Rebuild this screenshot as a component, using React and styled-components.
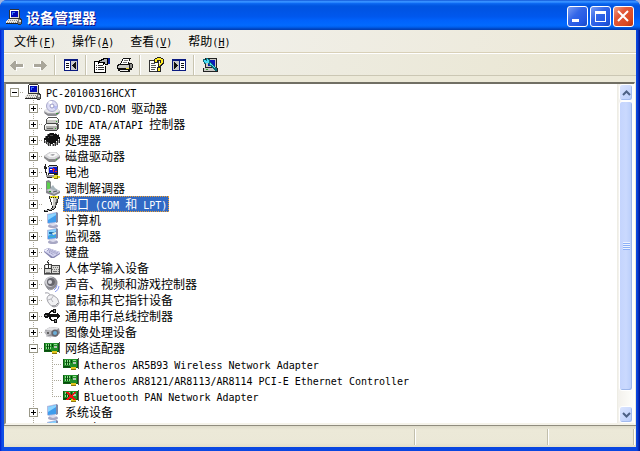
import React, { useState } from "react";
import styled, { createGlobalStyle, css } from "styled-components";

const GlobalStyle = createGlobalStyle`
  *, *::before, *::after {
    box-sizing: border-box;
  }
  body {
    margin: 0;
    background: #9fb4e0;
    color: #000;
    font-family: "Noto Sans CJK SC", sans-serif;
    font-size: 12px;
    line-height: 16px;
  }
  button {
    margin: 0;
    padding: 0;
    border: 0;
    background: transparent;
    color: inherit;
    font: inherit;
  }
  svg {
    display: block;
    flex: none;
  }
`;

const dots = (angle) =>
  `repeating-linear-gradient(${angle}, #aca899 0 1px, #fff 1px 2px)`;

/* ---------- icons ---------- */

const Pixel = ({ children }) => (
  <svg
    width="16"
    height="16"
    viewBox="0 0 16 16"
    shapeRendering="crispEdges"
    aria-hidden="true"
  >
    {children}
  </svg>
);

const Smooth = ({ children }) => (
  <svg width="16" height="16" viewBox="0 0 16 16" aria-hidden="true">
    {children}
  </svg>
);

const PcIcon = () => (
  <Pixel>
    <path fill="#333" d="M4 0h9v1h1v9H3V1h1z" />
    <path fill="#d6d3ce" d="M4 1h9v8H4z" />
    <path fill="#0008b8" d="M5 2h7v6H5z" />
    <path fill="#3f7cf8" d="M6 3h3v1H6zM6 4h1v2H6z" />
    <path fill="#fff" d="M4 1h9v1H4zM4 1h1v8H4z" />
    <path fill="#e8e6e0" d="M2 10h10v1H2zM1 11h12v1H1zM0 12h13v2H0z" />
    <path fill="#8b8b8b" d="M2 11h1v1H2zM4 11h1v1H4zM6 11h1v1H6zM8 11h1v1H8zM10 11h1v1h-1zM1 13h1v1H1zM3 13h1v1H3zM5 13h1v1H5zM7 13h1v1H7zM9 13h1v1H9z" />
    <path fill="#222" d="M0 14h12v1H0z" />
    <path fill="#777" d="M12 10h3v5h-2v1h-1v-2h-1v-2h1z" />
    <path fill="#ddd" d="M13 11h2v2h-2z" />
    <path fill="#333" d="M14 9h1v1h1v5h-1v-4h-1zM12 15h3v1h-3z" />
  </Pixel>
);

const DiscIcon = () => (
  <Smooth>
    <path d="M0 11l4-3h9l3 3v2l-4 3H4l-4-3z" fill="#a9a9ae" />
    <path d="M0 11l4-3h9l3 3-4 2H4z" fill="#e9e9ec" />
    <path d="M1 13l3 2h8l3-2" fill="none" stroke="#77777c" />
    <circle cx="8" cy="6" r="5.5" fill="#dcdcf4" stroke="#a8a8c8" />
    <path d="M8 6L4 2a6 6 0 0 1 4-1z" fill="#fff" />
    <path d="M8 6l4 4a6 6 0 0 0 1-4z" fill="#b6bcf2" />
    <circle cx="8" cy="6" r="2" fill="#fff" stroke="#9898c4" />
    <path d="M12 13h2v1h-2z" fill="#3c9a3c" />
  </Smooth>
);

const IdeIcon = () => (
  <Pixel>
    <path fill="#555" d="M4 1h9v1h1v1h1v4h-1v1H2V3h1V2h1z" />
    <path fill="#c8c8c4" d="M3 4h11v3H3z" />
    <path fill="#fff" d="M4 2h9v1H4zM3 3h11v1H3z" />
    <path fill="#444" d="M2 7h10v1h1v1h1v5h-1v1H1v-1H0V9h1V8h1z" />
    <path fill="#b2b2ae" d="M1 10h12v4H1z" />
    <path fill="#f2f2f0" d="M2 8h10v1H2zM1 9h12v1H1zM1 10h1v3H1z" />
    <path fill="#666" d="M3 12h6v1H3zM13 8h2v5h-1V9h-1z" />
    <path fill="#2caa2c" d="M11 12h1v1h-1zM12 5h1v1h-1z" />
  </Pixel>
);

const ChipIcon = () => (
  <Pixel>
    <path fill="#111" d="M6 1h4v1h3v1h2v2h1v2h-2v2h-2v2H9v1H6v-1H4v-1H2V8H0V6h2V4h2V2h2z" />
    <path fill="#777" d="M5 1h1v1H5zM3 2h1v2H3zM1 4h1v2H1zM11 1h1v1h-1zM14 2h1v1h-1z" />
    <path fill="#333" d="M0 8h1v3H0zM2 9h1v3H2zM4 10h1v4H4zM6 12h1v2H6zM9 12h1v2H9zM11 11h1v3h-1zM13 9h1v4h-1zM15 7h1v4h-1z" />
    <path fill="#999" d="M1 9h1v2H1zM3 10h1v3H3zM5 11h1v3H5zM8 12h1v2H8zM10 11h1v3h-1zM12 10h1v3h-1zM14 8h1v3h-1z" />
    <path fill="#4c4c4c" d="M6 3h3v1H6zM4 5h1v1H4z" />
  </Pixel>
);

const DriveIcon = () => (
  <Smooth>
    <path d="M0 8l6-4h6l4 4v2l-5 4H5l-5-4z" fill="#8a8a8c" />
    <path d="M0 8l6-4h6l4 4-5 3H5z" fill="#d9d9db" />
    <path d="M3 7l4-2h5l2 2-4 2H6z" fill="#f7f7f7" />
    <path d="M6 7l2-1h3l-2 2z" fill="#a8a8ac" />
    <path d="M12 11h1v1h-1z" fill="#3fae3f" />
  </Smooth>
);

const BatteryIcon = () => (
  <Pixel>
    <path fill="#222" d="M1 0h1v3h1v2H2v3h1v3H2V9H1V5H0V2h1zM5 1h8v1h1v9h-1v1H4V2h1z" />
    <path fill="#ccc" d="M5 2h8v1H5zM4 3h1v6H4z" />
    <path fill="#0b17d0" d="M5 3h8v6H5z" />
    <path fill="#4f7cff" d="M5 3h4v1H5z" />
    <path fill="#e32222" d="M9 4h1v1h1v1h-1v2H9V6H8V5h1zM11 7h2v1h-2z" />
    <path fill="#fff" d="M6 5h2v1H6zM5 10h5v1H5z" />
    <path fill="#999" d="M2 11h9v2H2z" />
    <path fill="#222" d="M3 13h7v1H3z" />
    <path fill="#e4dc2c" d="M10 11h4v1h2v2h-2v1h-4v-1H8v-1h2z" />
    <path fill="#7a7411" d="M10 14h4v1h-4zM13 12h1v2h-1z" />
  </Pixel>
);

const ModemIcon = () => (
  <Smooth>
    <path d="M2 1l3-1 2 2v9l-4 1-1-2z" fill="#7e8584" />
    <path d="M3 2l3 1v6H3z" fill="#5ccf4e" />
    <path d="M2 10l6-2 8 3v2l-6 3-8-3z" fill="#85858c" />
    <path d="M2 10l6-2 8 3-6 3z" fill="#c9c9d0" />
    <path d="M7 7l2-2 2 3 3 2-3 1-4-2z" fill="#a7b5bc" />
    <path d="M9 12l4-1" stroke="#53535c" />
    <path d="M5 11h2v1H5z" fill="#2a9c2a" />
  </Smooth>
);

const PortIcon = () => (
  <Pixel>
    <path fill="#333" d="M5 0h10v3h-1v4h-1v2h-1v2H8V9H7V6H6V3H5z" />
    <path fill="#f3e21e" d="M6 0h8v2H6z" />
    <path fill="#222" d="M7 1h1v1H7zM9 1h1v1H9zM11 1h1v1h-1z" />
    <path fill="#c9c9c4" d="M6 2h8v1H6zM7 3h6v3H7zM8 6h4v4H8z" />
    <path fill="#fff" d="M7 2h2v4H7zM8 6h1v3H8z" />
    <path fill="#777" d="M12 3h1v3h-1zM11 6h1v4h-1z" />
    <path fill="#111" d="M8 10h4v2h-1v1h-1v1H8v1H4v1H0v-2h3v-1h4v-1h1z" />
    <path fill="#aaa" d="M9 10h2v2H9zM8 12h2v1H8zM5 13h3v1H5zM1 14h4v1H1z" />
  </Pixel>
);

const MonitorIcon = ({ art }) => (
  <Smooth>
    <ellipse cx="9" cy="14" rx="5" ry="2" fill="#a8a8c4" />
    <path d="M7 11l4-1 1 3-3 1-3-1z" fill="#dcdcec" />
    <path d="M3 2l9-2 2 1v9l-9 2-2-1z" fill="#b4bce0" />
    <path d="M12 0l2 1v9l-2 1z" fill="#7f89aa" />
    <path d="M4 3l8-2v9l-8 1z" fill="#3f9cec" />
    <path d="M4 3l8-2v2l-8 5z" fill="#8cd4ff" />
    {art && (
      <>
        <path d="M5 4h5v2H5z" fill="#1e6fae" />
        <path d="M8 5l4-1v2l-3 1z" fill="#e3efe0" />
        <path d="M5 8h6v1H5z" fill="#3fb3bc" />
      </>
    )}
  </Smooth>
);

const KeyboardIcon = () => (
  <Smooth>
    <path d="M0 6l4-2 12 4v2l-6 4H7L0 8z" fill="#8585b0" />
    <path d="M0 6l4-2 12 4v1l-7 4L0 7z" fill="#d2d2ee" />
    <path
      d="M3 6l10 4M4 5l10 4M5 8l5 3"
      stroke="#8383ae"
      strokeDasharray="1 1"
    />
    <path d="M1 7l3-2" stroke="#fff" />
  </Smooth>
);

const HidIcon = () => (
  <Pixel>
    <path fill="#444" d="M3 1h1v2H3zM4 0h1v1H4zM1 4h7v1h8v9H0V5h1z" />
    <path fill="#d8d8d4" d="M1 5h6v8H1zM8 6h7v7H8z" />
    <path fill="#333" d="M4 2h1v6H4zM1 8h6v1H1z" />
    <path fill="#fff" d="M2 5h2v3H2zM5 5h1v3H5z" />
    <path fill="#777" d="M9 7h1v1H9zM11 7h1v1h-1zM13 7h1v1h-1zM8 9h1v1H8zM10 9h1v1h-1zM12 9h1v1h-1zM14 9h1v1h-1zM9 11h4v1H9zM14 11h1v1h-1z" />
    <path fill="#888" d="M0 14h16v1H0zM2 12h4v1H2z" />
  </Pixel>
);

const SpeakerIcon = () => (
  <Smooth>
    <circle cx="7" cy="7" r="6.5" fill="#8a8a90" />
    <circle cx="6" cy="6" r="5" fill="#cfcfd4" />
    <circle cx="7" cy="6" r="4" fill="#66666d" />
    <circle cx="6" cy="6" r="2" fill="#d9d9de" />
    <path d="M3 12l2 2 4-1" fill="none" stroke="#96969c" />
    <path
      d="M13 9q0 3-3 5M15 10q0 4-4 6"
      fill="none"
      stroke="#8b9bf0"
    />
  </Smooth>
);

const MouseIcon = () => (
  <Smooth>
    <path d="M1 1q5-1 5 3" fill="none" stroke="#9c9ca4" />
    <path
      d="M3 6q1-4 6-3 6 3 6 8-1 4-5 4-4-1-6-5-1-2-1-4z"
      fill="#f1f1f3"
      stroke="#a6a6ac"
    />
    <path d="M4 8q4 0 6-5M7 7l2 3" fill="none" stroke="#b5b5bb" />
    <path d="M8 14q4 1 6-3" fill="none" stroke="#85858b" />
  </Smooth>
);

const UsbIcon = () => (
  <Pixel>
    <path fill="#111" d="M1 5h3v1h9V5h1v1h1v1h1v2h-1v1h-1v1h-1V9H4v1H1V9H0V6h1z" />
    <path fill="#111" d="M4 5h1V4h1V3h1V2h2V1h3v4H9V4H7v1H6v1H5v1H4zM6 9h1v2h1v1h2v-1h3v4h-3v-2H7v-1H6v-1H5V9z" />
    <path fill="#888" d="M1 7h2v1H1zM10 2h1v2h-1zM11 12h1v2h-1z" />
  </Pixel>
);

const CameraIcon = () => (
  <Smooth>
    <path d="M1 6l5-3 9 1 1 5-4 4-9-1z" fill="#96969b" />
    <path d="M1 6l5-3 9 1-4 3z" fill="#e4e4e7" />
    <path d="M0 8l4-2 3 1v3l-4 2z" fill="#b7b7bb" />
    <circle cx="11" cy="9" r="3.5" fill="#66666d" />
    <circle cx="11" cy="9" r="2" fill="#6aaed6" />
    <circle cx="4" cy="9" r="1" fill="#444" />
    <path d="M2 12l5 1" stroke="#c4c4c8" />
  </Smooth>
);

const NetworkIcon = ({ disabled }) => (
  <Pixel>
    <path fill="#0d5c12" d="M0 3h15v9H0z" />
    <path fill="#22902a" d="M1 3h13v8H1z" />
    <path fill="#8fe08c" d="M2 4h1v2H2zM4 4h1v2H4zM6 4h1v2H6zM2 7h1v2H2zM4 7h1v2H4zM6 7h1v2H6zM10 4h3v1h-3z" />
    <path fill="#084a0c" d="M3 4h1v5H3zM5 4h1v5H5zM8 4h1v3H8zM1 10h6v1H1z" />
    <path fill="#b5c4b5" d="M10 6h3v2h-3z" />
    <path fill="#555" d="M15 2h1v11h-1z" />
    <path fill="#e2c51e" d="M8 11h5v2H8z" />
    <path fill="#8b7410" d="M8 13h5v1H8z" />
    {disabled && (
      <path fill="#f01010" d="M3 4h3v1h1v1h1v1h1V6h1V5h1V4h2v1h-1v1h-1v1h-1v2h1v1h1v1h1v1h-3v-1H9v-1H7v1H6v1H3v-1h1v-1h1V9h1V7H5V6H4V5H3z" />
    )}
  </Pixel>
);

const ArrowIcon = ({ flip }) => (
  <Pixel>
    <g transform={flip ? "matrix(-1 0 0 1 16 0)" : undefined}>
      <path fill="#fff" d="M7 4h1v3h7v4H8v3H7z" />
      <path fill="#a9a69a" d="M1 8h1V7h1V6h1V5h1V4h2v3h7v3H7v3H5v-1H4v-1H3v-1H2V9H1z" />
    </g>
  </Pixel>
);

const PaneIcon = ({ flip }) => (
  <Pixel>
    <g transform={flip ? "matrix(-1 0 0 1 16 0)" : undefined}>
      <path fill="#0a1a80" d="M1 2h14v12H1z" />
      <path fill="#fff" d="M2 4h5v9H2z" />
      <path fill="#c9c9c9" d="M8 4h6v9H8z" />
      <path fill="#111" d="M3 6h3v1H3zM3 8h3v1H3zM3 10h3v1H3zM12 5h1v7h-1v-1h-1v-1h-1V9H9V8h1V7h1V6h1z" />
    </g>
  </Pixel>
);

const PropertiesIcon = () => (
  <Pixel>
    <path fill="#000" d="M0 4h6v1H1v10h10V9h1v7H0z" />
    <path fill="#fff" d="M1 5h10v10H1z" />
    <path fill="#333" d="M2 8h1v1H2zM4 8h5v1H4zM2 10h1v1H2zM4 10h6v1H4zM2 12h1v1H2zM4 12h6v1H4z" />
    <path fill="#000" d="M4 5V4h1V3h2V2h2V1h5v7h-3V7h-1v1H9V6H5v1H4z" />
    <path fill="#aeb2b5" d="M6 4h2V3h2V2h3v5h-2V5H6z" />
    <path fill="#0a1f9c" d="M14 1h2v6h-2z" />
  </Pixel>
);

const PrinterIcon = () => (
  <Pixel>
    <path fill="#111" d="M6 1h8v1h-1v2h-1v2h3v1h1v4h-1v2h-2v2H3v-1H1v-2H0V8h1V7h2V6h1V4h1V2h1z" />
    <path fill="#fff" d="M6 2h6v1H6zM6 3h6v2H5zM5 5h6v2H4z" />
    <path fill="#777" d="M7 3h4v1H7zM6 5h4v1H6z" />
    <path fill="#c9c9c5" d="M2 8h10v2H2zM1 9h11v2H1z" />
    <path fill="#8a8a86" d="M13 7h2v4h-2z" />
    <path fill="#ead926" d="M9 11h3v1H9z" />
    <path fill="#eee" d="M3 13h8v1H3z" />
  </Pixel>
);

const HelpIcon = () => (
  <Pixel>
    <path fill="#333" d="M1 3h8v1h2v11H1z" />
    <path fill="#fff" d="M2 4h8v10H2z" />
    <path fill="#555" d="M3 6h4v1H3zM3 8h5v1H3zM3 10h5v1H3zM3 12h4v1H3z" />
    <path fill="#222" d="M6 2h1V1h2V0h4v1h2v1h1v5h-1v1h-1v1h-1v1h-3V7h2V4h-2v2H6z" />
    <path fill="#ffea1f" d="M7 2h2V1h4v1h2v4h-1v1h-1v1h-1v1h-1V7h1V6h1V3H9v2H7z" />
    <path fill="#222" d="M9 10h4v5H9z" />
    <path fill="#ffea1f" d="M10 11h2v3h-2z" />
  </Pixel>
);

const ScanIcon = () => (
  <Pixel>
    <path fill="#222" d="M3 1h12v10h1v4H1v-4h2z" />
    <path fill="#c8c8c4" d="M4 2h10v8H4zM2 11h12v3H2z" />
    <path fill="#0a1cb8" d="M6 3h7v6H6z" />
    <path fill="#0c6b78" d="M1 2h2v1h1V1h2v1h2v3h1v1h1v1h1v1h1v1h1v1h1v1h1v3h-2v-1h-1v-1h-1v-1h-1v-1H9V9H8V8H7V7H6V6H4v1H2V5H1z" />
    <path fill="#48dcf5" d="M2 3h2v1h1V2h1v1h1v3H3V5H2zM8 6h1v1h1v1h1v1h1v1h1v1h-1v-1h-1V9h-1V8H8z" />
    <path fill="#2cae2c" d="M4 12h2v1H4z" />
  </Pixel>
);

const Chevron = ({ down }) => (
  <svg width="9" height="6" viewBox="0 0 9 6" aria-hidden="true">
    <path
      fill="none"
      stroke="#4d6185"
      strokeWidth="2"
      d={down ? "M1 1l3.5 3.500L8 1" : "M1 5l3.500-3.500L8 5"}
    />
  </svg>
);

const CaptionGlyph = ({ d, stroke }) => (
  <svg
    width="19"
    height="19"
    viewBox="0 0 19 19"
    fill={stroke ? "none" : "#fff"}
    stroke={stroke ? "#fff" : "none"}
    strokeWidth="2"
    fillRule="evenodd"
    aria-hidden="true"
  >
    <path d={d} />
  </svg>
);

/* ---------- text ---------- */

const Latin = styled.span`
  font-family: "DejaVu Sans Mono", monospace;
  font-size: 10px;
`;

// latin runs take half-width cells beside the full-width characters
const Mixed = ({ children }) =>
  children
    .split(/([\x20-\x7e]+)/)
    .filter(Boolean)
    .map((part, i) =>
      /[\x20-\x7e]/.test(part) ? <Latin key={i}>{part}</Latin> : part
    );

/* ---------- data ---------- */

const menus = [
  { label: "文件", hotkey: "F" },
  { label: "操作", hotkey: "A" },
  { label: "查看", hotkey: "V" },
  { label: "帮助", hotkey: "H" },
];

const tools = [
  [
    { name: "后退", icon: <ArrowIcon />, disabled: true },
    { name: "前进", icon: <ArrowIcon flip />, disabled: true },
  ],
  [{ name: "显示/隐藏控制台树", icon: <PaneIcon /> }],
  [
    { name: "属性", icon: <PropertiesIcon /> },
    { name: "打印", icon: <PrinterIcon /> },
  ],
  [
    { name: "帮助", icon: <HelpIcon /> },
    { name: "显示/隐藏操作窗格", icon: <PaneIcon flip /> },
  ],
  [{ name: "扫描检测硬件改动", icon: <ScanIcon /> }],
];

const devices = [
  { name: "DVD/CD-ROM 驱动器", icon: <DiscIcon /> },
  { name: "IDE ATA/ATAPI 控制器", icon: <IdeIcon /> },
  { name: "处理器", icon: <ChipIcon /> },
  { name: "磁盘驱动器", icon: <DriveIcon /> },
  { name: "电池", icon: <BatteryIcon /> },
  { name: "调制解调器", icon: <ModemIcon /> },
  { name: "端口 (COM 和 LPT)", icon: <PortIcon /> },
  { name: "计算机", icon: <MonitorIcon /> },
  { name: "监视器", icon: <MonitorIcon art /> },
  { name: "键盘", icon: <KeyboardIcon /> },
  { name: "人体学输入设备", icon: <HidIcon /> },
  { name: "声音、视频和游戏控制器", icon: <SpeakerIcon /> },
  { name: "鼠标和其它指针设备", icon: <MouseIcon /> },
  { name: "通用串行总线控制器", icon: <UsbIcon /> },
  { name: "图像处理设备", icon: <CameraIcon /> },
  {
    name: "网络适配器",
    icon: <NetworkIcon />,
    children: [
      { name: "Atheros AR5B93 Wireless Network Adapter", icon: <NetworkIcon /> },
      {
        name: "Atheros AR8121/AR8113/AR8114 PCI-E Ethernet Controller",
        icon: <NetworkIcon />,
      },
      { name: "Bluetooth PAN Network Adapter", icon: <NetworkIcon disabled /> },
    ],
  },
  { name: "系统设备", icon: <MonitorIcon /> },
  { name: "显示卡", icon: <MonitorIcon art /> },
];

/* ---------- tree ---------- */

const Node = ({ item, open, onToggle, selected, onSelect, depth, last }) => (
  <Row role="treeitem" aria-expanded={open} aria-selected={selected === item.name}>
    {depth > 0 && <Cell $first />}
    {depth > 1 && <Cell $line />}
    <Cell $first={depth === 0} $line={depth > 0} $last={last} $branch>
      {depth < 2 && (
        <Toggle
          type="button"
          aria-label={`${open ? "折叠" : "展开"} ${item.name}`}
          onClick={() => onToggle(item.name)}
          $open={open}
        />
      )}
    </Cell>
    <IconSlot>{item.icon}</IconSlot>
    <Label
      type="button"
      $selected={selected === item.name}
      onClick={() => onSelect(item.name)}
    >
      <Mixed>{item.name}</Mixed>
    </Label>
  </Row>
);

const App = () => {
  const root = "PC-20100316HCXT";
  const [openNodes, setOpenNodes] = useState([root, "网络适配器"]);
  const [selected, setSelected] = useState("端口 (COM 和 LPT)");

  const onToggle = (name) =>
    setOpenNodes((nodes) =>
      nodes.includes(name) ? nodes.filter((n) => n !== name) : [...nodes, name]
    );
  const shared = { onToggle, selected, onSelect: setSelected };

  return (
    <>
      <GlobalStyle />
      <Window>
        <TitleBar>
          <PcIcon />
          <Title>设备管理器</Title>
          <Caption type="button" aria-label="最小化">
            <CaptionGlyph d="M4 12h7v3H4z" />
          </Caption>
          <Caption type="button" aria-label="最大化">
            <CaptionGlyph d="M4 4h11v11H4zM5 7v7h9V7z" />
          </Caption>
          <Caption type="button" aria-label="关闭" $close>
            <CaptionGlyph stroke d="M4 4l10 10M14 4L4 14" />
          </Caption>
        </TitleBar>
        <Client>
          <MenuBar>
            {menus.map(({ label, hotkey }) => (
              <MenuItem type="button" key={label}>
                {label}
                <Latin>
                  (<u>{hotkey}</u>)
                </Latin>
              </MenuItem>
            ))}
          </MenuBar>
          <ToolBar>
            {tools.map((group, i) => (
              <ToolGroup key={i}>
                {group.map(({ name, icon, disabled }) => (
                  <Tool type="button" key={name} aria-label={name} disabled={disabled}>
                    {icon}
                  </Tool>
                ))}
              </ToolGroup>
            ))}
          </ToolBar>
          <Pane>
            <Tree role="tree">
              <Node
                item={{ name: root, icon: <PcIcon /> }}
                open={openNodes.includes(root)}
                depth={0}
                {...shared}
              />
              {openNodes.includes(root) &&
                devices.map((item) => {
                  const open = openNodes.includes(item.name);
                  return (
                    <React.Fragment key={item.name}>
                      <Node item={item} open={open} depth={1} {...shared} />
                      {open &&
                        item.children?.map((child, i) => (
                          <Node
                            key={child.name}
                            item={child}
                            depth={2}
                            last={i === item.children.length - 1}
                            {...shared}
                          />
                        ))}
                    </React.Fragment>
                  );
                })}
            </Tree>
            <ScrollBar>
              <ScrollButton type="button" aria-label="向上滚动">
                <Chevron />
              </ScrollButton>
              <Track>
                <Thumb>
                  <Grip />
                </Thumb>
              </Track>
              <ScrollButton type="button" aria-label="向下滚动">
                <Chevron down />
              </ScrollButton>
            </ScrollBar>
          </Pane>
          <StatusBar>
            <StatusCell />
            <StatusCell />
            <StatusCell />
          </StatusBar>
        </Client>
      </Window>
    </>
  );
};

const Window = styled.div`
  display: flex;
  flex-direction: column;
  height: 100vh;
  overflow: hidden;
  border-radius: 7px 7px 0 0;
  background: linear-gradient(90deg, #0019cf 0, #0f4ee6 2px, #0a46e0 50%, #0a46e0 calc(100% - 3px), #00138c 100%);
`;

const TitleBar = styled.header`
  display: flex;
  flex: none;
  align-items: center;
  gap: 2px;
  height: 30px;
  padding: 3px 6px 0;
  background: linear-gradient(
    #0a4bd0 0,
    #3a93ff 4%,
    #2b87ff 8%,
    #0a66f0 12%,
    #0055e0 20%,
    #0054e3 30%,
    #0058ee 56%,
    #0062fb 68%,
    #026afe 84%,
    #0060ee 90%,
    #0046c2 96%,
    #003bb0 100%
  );
`;

const Title = styled.h1`
  flex: 1;
  margin: 0;
  padding-left: 2px;
  color: #fff;
  font-size: 14px;
  font-weight: 700;
  line-height: 20px;
  text-shadow: 1px 1px #0f1089;
`;

const Caption = styled.button`
  width: 21px;
  height: 21px;
  border: 1px solid #fff;
  border-radius: 3px;
  background: linear-gradient(135deg, #7a9cf3 0, #3467e8 40%, #2458e4 75%, #1a49c4 100%);
  ${({ $close }) =>
    $close &&
    css`
      background: linear-gradient(135deg, #f0a088 0, #e2593a 35%, #dc4a20 75%, #b83410 100%);
    `}
`;

const Client = styled.main`
  display: flex;
  flex: 1;
  flex-direction: column;
  min-height: 0;
  margin: 0 4px 4px;
  background: #ece9d8;
`;

const MenuBar = styled.nav`
  display: flex;
  flex: none;
  height: 24px;
  padding: 0 2px;
  border-bottom: 1px solid #fff;
  background: linear-gradient(100deg, #ecebe2 0, #f1f0ea 30%, #ece8d7 100%);
  box-shadow: inset 0 -1px #d8d0b8;
`;

const MenuItem = styled.button`
  height: 22px;
  padding: 0 8px;
  line-height: 22px;
`;

const ToolBar = styled.div`
  display: flex;
  flex: none;
  height: 22px;
  padding: 0 1px;
  border-bottom: 1px solid #cbc7b4;
  background: linear-gradient(100deg, #ecebe0 0, #efeee6 30%, #e9e5d0 100%);
`;

const ToolGroup = styled.div`
  display: flex;
  & + &::before {
    content: "";
    width: 2px;
    height: 20px;
    margin: 1px 3px;
    border-left: 1px solid #c8c4b0;
    border-right: 1px solid #fff;
  }
`;

const Tool = styled.button`
  display: flex;
  align-items: center;
  justify-content: center;
  width: 23px;
  height: 22px;
`;

const Pane = styled.section`
  display: flex;
  flex: 1;
  min-height: 0;
  margin: 6px 1px 0 0;
  border: solid #716f64;
  border-width: 2px 1px 2px 2px;
  border-color: #716f64 #fff #f5f3ea #8f8c80;
  background: #fff;
`;

const Tree = styled.div`
  flex: 1;
  min-width: 0;
  overflow: hidden;
`;

const Row = styled.div`
  display: flex;
  height: 16px;
`;

const Cell = styled.span`
  display: flex;
  flex: none;
  align-items: center;
  justify-content: flex-end;
  width: ${({ $first }) => ($first ? 18 : 19)}px;
  padding-right: 5px;
  background:
    ${({ $branch }) =>
      $branch
        ? `${dots("90deg")} right center / 10px 1px no-repeat`
        : "none"},
    ${({ $line, $last }) =>
      $line
        ? `${dots("180deg")} right 9px top / 1px ${$last ? "50%" : "100%"} no-repeat`
        : "none"};
`;

const Toggle = styled.button`
  width: 9px;
  height: 9px;
  border: 1px solid #9a9888;
  background:
    linear-gradient(#000, #000) center / 5px 1px no-repeat,
    linear-gradient(#000, #000) center / 1px ${({ $open }) => ($open ? 0 : 5)}px no-repeat,
    #fff;
`;

const IconSlot = styled.span`
  flex: none;
  width: 20px;
  padding-left: 1px;
`;

const Label = styled.button`
  flex: none;
  height: 16px;
  padding: 0 2px;
  white-space: pre;
  ${({ $selected }) =>
    $selected &&
    css`
      background: #316ac5;
      color: #fff;
      outline: 1px dotted #f0a030;
      outline-offset: -1px;
    `}
`;

const ScrollBar = styled.div`
  display: flex;
  flex: none;
  flex-direction: column;
  width: 17px;
  padding: 0 1px;
  border-left: 1px solid #eeede5;
  background: linear-gradient(90deg, #f3f1ec, #fefefb);
`;

const ScrollButton = styled.button`
  display: flex;
  flex: none;
  align-items: center;
  justify-content: center;
  height: 17px;
  border: 1px solid #fff;
  border-radius: 3px;
  background: linear-gradient(135deg, #dbe5ff, #b9cdfb);
  box-shadow: inset -1px -1px #a3bbee;
`;

const Track = styled.div`
  flex: 1;
  min-height: 0;
`;

const Thumb = styled.div`
  display: flex;
  align-items: center;
  justify-content: center;
  height: 95%;
  border: 1px solid #fff;
  border-radius: 3px;
  background: linear-gradient(90deg, #c4d4fd, #cad9fe 50%, #b9cdfa);
  box-shadow: inset -1px -1px #9db6ea;
`;

const Grip = styled.span`
  width: 7px;
  height: 8px;
  background: repeating-linear-gradient(#eef4fe 0 1px, #8cb0f8 1px 2px);
`;

const StatusBar = styled.footer`
  display: flex;
  flex: none;
  height: 22px;
  padding: 3px 1px 2px;
  border-top: 1px solid #8f8c7e;
  background: linear-gradient(#dedbc9 0, #ece9d8 4px, #ebe8d7 80%, #e2dfca 100%);
`;

const StatusCell = styled.div`
  flex: 0 0 86px;
  border-right: 1px solid #fff;
  box-shadow: inset -1px 0 #c2bfac;
  &:first-child {
    flex: 1;
  }
  &:nth-child(2) {
    flex: 0 0 133px;
  }
`;

export default App;
